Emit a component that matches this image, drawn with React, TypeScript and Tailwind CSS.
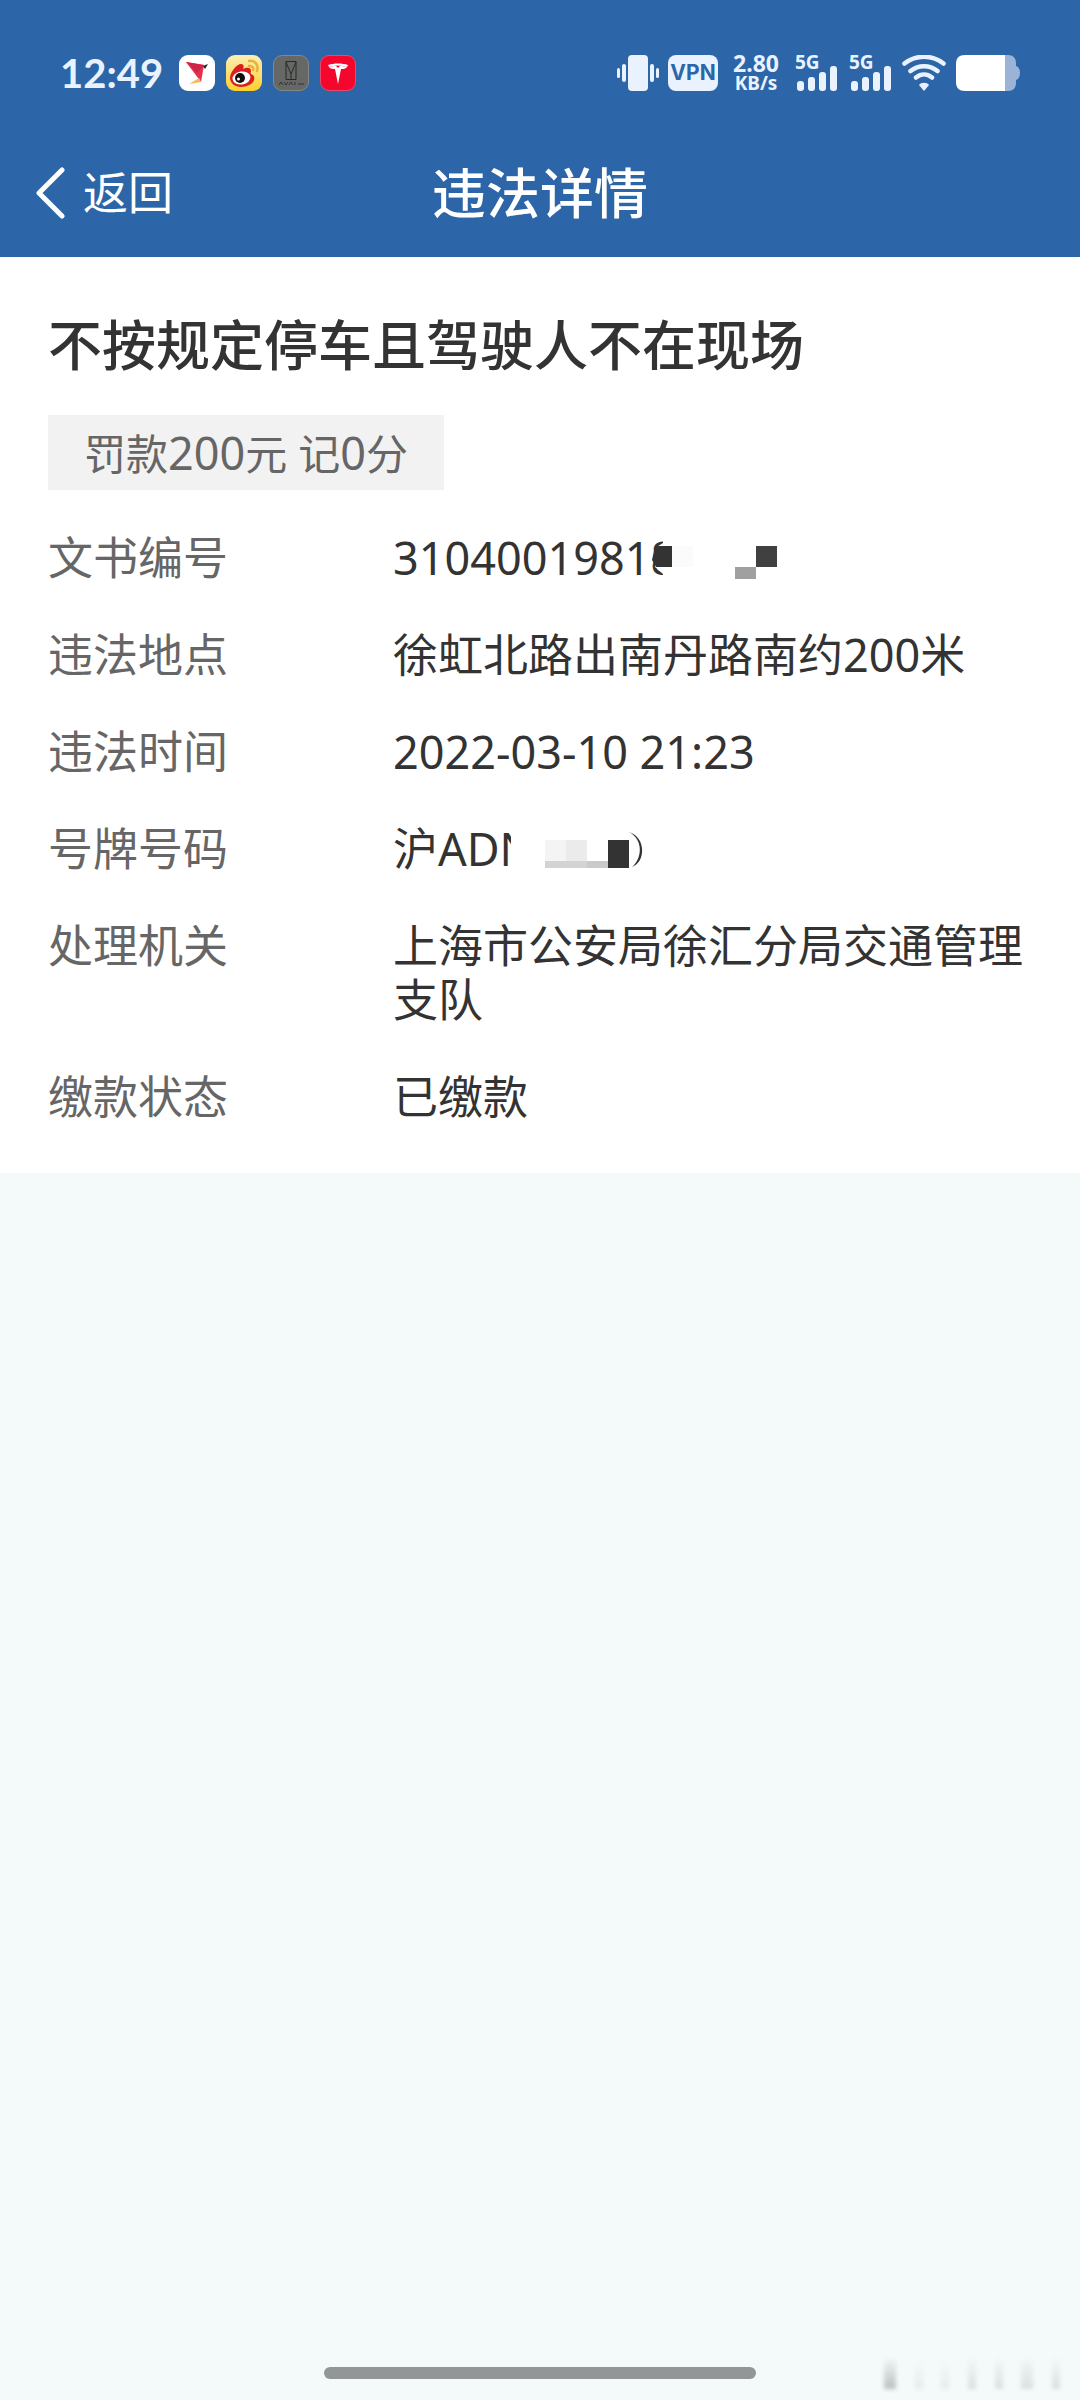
import type { ReactNode } from "react";

function Signal() {
  return (
    <div className="relative h-9 w-[42px]">
      <span className="absolute left-0 top-0 font-['Noto_Sans'] text-[19px] font-bold leading-[15px]">5G</span>
      <svg className="h-9 w-[42px]" viewBox="0 0 42 36" fill="currentColor" aria-hidden="true">
        <rect x="2" y="26" width="7" height="10" rx="3" />
        <rect x="13" y="22" width="7" height="14" rx="3" />
        <rect x="24" y="17" width="7" height="19" rx="3" />
        <rect x="35" y="11" width="7" height="25" rx="3" />
      </svg>
    </div>
  );
}

function AppIcons() {
  return (
    <div className="flex gap-[11px]">
      <svg className="size-9" viewBox="0 0 36 36" aria-hidden="true">
        <rect width="36" height="36" rx="9" fill="#fff" />
        <path d="M7 7 25 10 22 27Z" fill="#e5304f" />
        <path d="M7 7 25 10 18 18Z" fill="#cf2447" />
        <path d="M24 11 29 9 26 14Z" fill="#222" />
        <path d="M20 23 22 27 10 29Z" fill="#f6b85c" />
      </svg>
      <svg className="size-9" viewBox="0 0 36 36" aria-hidden="true">
        <defs>
          <linearGradient id="wb" x1="0" y1="0" x2="0" y2="1">
            <stop offset="0" stopColor="#fdf0b4" />
            <stop offset="1" stopColor="#fcd02c" />
          </linearGradient>
        </defs>
        <rect width="36" height="36" rx="9" fill="url(#wb)" />
        <path d="M4 23C4 17 11 9 15 9c3 0 3 3 2 5 4-2 8-2 8 2 0 1-1 2 0 3 3 1 4 3 3 6-1 4-7 7-13 7S4 28 4 23Z" fill="#d9201f" />
        <ellipse cx="15.500" cy="23" rx="9" ry="6.500" fill="#fff" transform="rotate(-8 15.500 23)" />
        <circle cx="14" cy="23" r="5" fill="#111" />
        <circle cx="12.500" cy="24" r="1.500" fill="#fff" />
        <path d="M23 6c6-1 10 4 8 10M23 11c3-.5 5 2 4 4" fill="none" stroke="#e9b03a" strokeWidth="2.500" strokeLinecap="round" />
      </svg>
      <svg className="size-9" viewBox="0 0 36 36" aria-hidden="true">
        <rect x=".5" y=".5" width="35" height="35" rx="8.500" fill="#666865" stroke="#858886" />
        <path d="M13 6.500h10v18H13ZM13 7l5 12 5-12M18 19v5" fill="none" stroke="#292929" />
        <path d="m6 30 2-3 2 3m1-3 2 3 2-3m1 3 2-3 2 3m2-3v3m3-1h6" fill="none" stroke="#333" />
      </svg>
      <svg className="size-9" viewBox="0 0 36 36" aria-hidden="true">
        <rect x=".5" y=".5" width="35" height="35" rx="8.500" fill="#f5062d" stroke="#e84a6c" />
        <path d="M8 10c6-2 14-2 20 0l-1 2c-6-2-12-2-18 0Z" fill="#fff" />
        <path d="M9 12c2 2 3 2 6 2l3 15 3-15c3 0 4 0 6-2-3-1-5-1-7-1l-2 2-2-2c-2 0-4 0-7 1Z" fill="#fff" />
      </svg>
    </div>
  );
}

function StatusBar() {
  return (
    <div className="flex h-[146px] items-center justify-between px-[60px] text-[#eaf2ff]">
      <div className="flex items-center gap-4">
        <time className="font-[Lato] text-[40px] font-bold leading-none">12:49</time>
        <AppIcons />
      </div>
      <div className="flex items-center">
        <svg className="h-9 w-[42px]" viewBox="0 0 42 36" fill="currentColor" aria-hidden="true">
          <rect x="11" width="20" height="36" rx="4" />
          <rect y="13" width="3" height="10" rx="1.500" />
          <rect x="5" y="9" width="4" height="18" rx="2" />
          <rect x="33" y="9" width="4" height="18" rx="2" />
          <rect x="39" y="13" width="3" height="10" rx="1.500" />
        </svg>
        <span className="ml-[9px] flex h-9 w-[50px] items-center justify-center rounded-lg bg-[#eaf2ff] font-[Inter] text-[21px] font-bold text-[#2c66a8]">
          VPN
        </span>
        <span className="ml-[14px] flex w-[48px] flex-col items-center font-['Noto_Sans'] font-bold">
          <span className="text-[23px] leading-[20px]">2.80</span>
          <span className="text-[19px] leading-[20px]">KB/s</span>
        </span>
        <div className="ml-[15px] flex gap-[12px]">
          <Signal />
          <Signal />
        </div>
        <svg className="ml-[11px] h-9 w-11" viewBox="0 0 44 36" fill="none" stroke="currentColor" strokeWidth="4.500" strokeLinecap="round" aria-hidden="true">
          <path d="M2.500 8.500C14-.5 30-.5 41.500 8.500M8.500 16c8-6.500 19-6.500 27 0M14 22.500c5-4 11-4 16 0" />
          <path d="m22 36-5-6c2-3 8-3 10 0Z" fill="currentColor" stroke="none" />
        </svg>
        <svg className="ml-[10px] h-9 w-16" viewBox="0 0 64 36" aria-hidden="true">
          <path d="M48 0h4c5 0 8 3 8 8v3c3 1 4 4 4 7s-1 6-4 7v3c0 5-3 8-8 8h-4Z" fill="#9ab3d6" />
          <path d="M9 0h40v36H9c-6 0-9-3-9-9V9c0-6 3-9 9-9Z" fill="#fff" />
        </svg>
      </div>
    </div>
  );
}

function Row({ label, children }: { label: string; children: ReactNode }) {
  return (
    <div className="flex">
      <dt className="w-[345px] shrink-0 text-[#666]">{label}</dt>
      <dd className="min-w-0 flex-1">{children}</dd>
    </div>
  );
}

export default function App() {
  return (
    <div className="relative flex min-h-screen flex-col bg-[#f4fafa] font-['Noto_Sans','Noto_Sans_CJK_SC',sans-serif] text-[#333]">
      <header className="bg-[#2c66a8] text-white">
        <StatusBar />
        <nav className="grid h-[111px] grid-cols-[1fr_auto_1fr] items-start px-9">
          <button type="button" className="flex items-center gap-[18px] justify-self-start pt-[17px] text-[45px] leading-[60px]">
            <svg className="h-[52px] w-[29px]" viewBox="0 0 29 52" fill="none" stroke="currentColor" strokeWidth="5" strokeLinecap="round" strokeLinejoin="round" aria-hidden="true">
              <path d="M26 3 3 26 26 49" />
            </svg>
            返回
          </button>
          <h1 className="pt-[15px] text-[54px] font-medium leading-[64px]">违法详情</h1>
        </nav>
      </header>
      <main className="bg-white px-12 pb-[49px] pt-[56px]">
        <h2 className="text-[54px] font-medium leading-[64px]">不按规定停车且驾驶人不在现场</h2>
        <p className="mt-[38px] flex h-[75px] w-fit items-center bg-[#f2f2f2] px-9 text-[42px] text-[#666]">
          <span>
            罚款<span className="text-[45px]">200</span>元 记<span className="text-[45px]">0</span>分
          </span>
        </p>
        <dl className="mt-[41px] flex flex-col gap-[43px] text-[45px] leading-[54px]">
          <Row label="文书编号">
            <span className="relative block w-fit">
              31040019818
              <svg className="absolute left-[255px] top-0 h-[54px] w-[140px]" viewBox="0 0 140 54" aria-hidden="true">
                <path d="M15 0h125v54H15V43l-8-7V17l8-5Z" fill="#fff" />
                <path d="M7 15h17v21H8l-4-7Z" fill="#333" />
                <rect x="24" y="15" width="21" height="21" fill="#fbfbfb" />
                <rect x="87" y="36" width="21" height="12" fill="#a0a0a0" />
                <rect x="108" y="15" width="21" height="21" fill="#404040" />
              </svg>
            </span>
          </Row>
          <Row label="违法地点">徐虹北路出南丹路南约200米</Row>
          <Row label="违法时间">2022-03-10 21:23</Row>
          <Row label="号牌号码">
            <span className="relative block w-fit">
              沪ADN
              <svg className="absolute left-[118px] top-0 h-[54px] w-[144px]" viewBox="0 0 144 54" aria-hidden="true">
                <path d="M0 0h144v54H0Z" fill="#fff" />
                <rect x="34" y="18" width="21" height="21" fill="#f4f4f4" />
                <rect x="55" y="18" width="21" height="21" fill="#ebebeb" />
                <rect x="34" y="39" width="42" height="7" fill="#d3d3d3" />
                <rect x="76" y="39" width="21" height="7" fill="#cacaca" />
                <rect x="97" y="18" width="21" height="28" fill="#333" />
                <path d="M118 10c17 5 17 30 3 35 10-8 12-27-3-35Z" fill="#333" />
              </svg>
            </span>
          </Row>
          <Row label="处理机关">上海市公安局徐汇分局交通管理支队</Row>
          <Row label="缴款状态">已缴款</Row>
        </dl>
      </main>
      <footer className="mt-auto flex justify-center pb-[21px]">
        <div className="h-3 w-2/5 rounded-full bg-[#929696]" />
      </footer>
      <div className="absolute bottom-[11px] right-5 flex h-9 w-[176px] items-end justify-between blur-[2px]" aria-hidden="true">
        <div className="h-8 w-3 bg-linear-to-b from-transparent to-[#b9bebf]" />
        <div className="h-7 w-2 bg-linear-to-b from-transparent to-[#e6eaea]" />
        <div className="h-7 w-2 bg-linear-to-b from-transparent to-[#e6eaea]" />
        <div className="h-8 w-2 bg-linear-to-b from-transparent to-[#d9dede]" />
        <div className="h-8 w-2 bg-linear-to-b from-transparent to-[#d9dede]" />
        <div className="h-8 w-3 bg-linear-to-b from-transparent to-[#d9dede]" />
        <div className="h-8 w-2 bg-linear-to-b from-transparent to-[#d9dede]" />
      </div>
    </div>
  );
}
